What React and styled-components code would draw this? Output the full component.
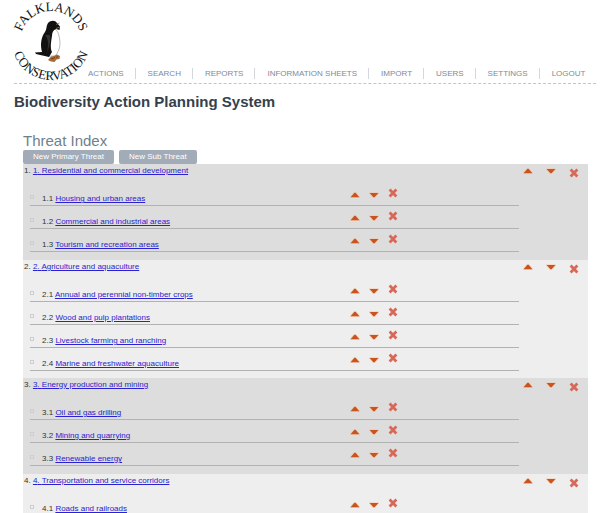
import React from "react";
import styled, { createGlobalStyle } from "styled-components";

const GlobalStyle = createGlobalStyle`
  * { box-sizing: border-box; }
  body {
    margin: 0;
    background: #fff;
    color: #333;
    font-family: "Liberation Sans", Arial, sans-serif;
    font-size: 8px;
    line-height: 10px;
  }
  h1, h2, ol, ul, p { margin: 0; padding: 0; }
  ol, ul { list-style: none; }
  button { border: 0; padding: 0; background: none; font: inherit; cursor: pointer; }
`;

const Page = styled.div`
  padding: 0 4px 0 14px;
`;

const Header = styled.header`
  display: flex;
  align-items: flex-end;
  height: 84px;
  border-bottom: 1px dashed #c4c4c4;
`;

const Logo = styled.svg`
  flex: none;
  width: 74px;
  height: 84px;
  overflow: visible;
`;

const LogoText = styled.text`
  font-family: "Liberation Serif", "Times New Roman", serif;
  font-size: 13px;
  fill: #111;
`;

const Menu = styled.ul`
  display: flex;
  padding-bottom: 4px;
`;

const MenuItem = styled.li`
  padding: 0 11px 0 12px;
  line-height: 11px;
  border-left: 1px solid #d4d8da;
  &:first-child { padding-left: 0; border-left: 0; }
`;

const MenuLink = styled.a`
  color: #7c8b97;
  text-decoration: none;
  text-transform: uppercase;
  white-space: nowrap;
`;

const Title = styled.h1`
  padding-top: 9px;
  color: #34414d;
  font-size: 15px;
  line-height: 18px;
`;

const Content = styled.main`
  margin: 21px 8px 0 9px;
`;

const Heading = styled.h2`
  color: #6f7f8c;
  font-size: 15px;
  font-weight: 400;
  line-height: 18px;
`;

const Actions = styled.div`
  display: flex;
  gap: 5px;
`;

const ActionButton = styled.button`
  && {
    height: 14px;
    padding: 0 10px;
    border-radius: 2px;
    background: #a1acb8;
    color: #fff;
  }
`;

const Group = styled.li`
  padding-bottom: 8px;
  background: #ddd;
  &:nth-child(even) { padding-bottom: 7px; background: #eee; }
`;

const GroupHead = styled.div`
  display: flex;
  justify-content: space-between;
  height: 19px;
  padding: 2px 9px 0 1px;
`;

const GroupTools = styled.div`
  display: grid;
  grid-template-columns: repeat(3, 10px);
  column-gap: 13px;
  padding-top: 2px;
  align-items: start;
`;

const Entry = styled.a`
  color: #2a22d0;
  text-decoration: underline;
`;

const SubList = styled.ul`
  margin: 0 69px 0 7px;
`;

const SubRow = styled.li`
  display: grid;
  grid-template-columns: 12px minmax(0, 308px) auto 1fr;
  height: 23px;
  border-bottom: 1px solid #b2b2b2;
`;

const Handle = styled.span`
  align-self: end;
  width: 4px;
  height: 4px;
  margin-bottom: 6px;
  border: 1px solid #ccced2;
`;

const SubName = styled.p`
  align-self: end;
  padding-bottom: 1px;
`;

const SubTools = styled.div`
  display: grid;
  grid-template-columns: repeat(3, 10px);
  column-gap: 9px;
  padding-top: 5px;
  align-items: start;
`;

const IconButton = styled.button`
  display: block;
  width: 10px;
  height: 10px;
  svg { display: block; }
`;

const UpIcon = () => (
  <svg width="10" height="10" viewBox="0 0 10 10" aria-hidden="true">
    <path d="M0 6V4.6L4 .2H6L10 4.6V6Z" fill="#f7c3a0" opacity=".6" />
    <path d="M.6 5.2 4.4 .8H5.6L9.4 5.2Z" fill="#c9541f" />
  </svg>
);

const DownIcon = () => (
  <svg width="10" height="10" viewBox="0 0 10 10" aria-hidden="true">
    <path d="M0 .2H10V1.6L6 6H4L0 1.6Z" fill="#f7c3a0" opacity=".6" />
    <path d="M.6 1H9.4L5.6 5.2H4.4Z" fill="#c9541f" />
  </svg>
);

const DeleteIcon = () => (
  <svg width="10" height="10" viewBox="0 0 10 10" aria-hidden="true">
    <path d="M2.6 2.6 7.4 7.4M7.4 2.6 2.6 7.4" stroke="#d86857" strokeWidth="2.8" strokeLinecap="square" />
  </svg>
);

const Move = styled(IconButton)`
  margin-top: ${(p) => (p.$sub ? 4 : 0)}px;
`;

function Tools({ name, sub }) {
  return (
    <>
      <Move $sub={sub} type="button" aria-label={`Move ${name} up`}><UpIcon /></Move>
      <Move $sub={sub} type="button" aria-label={`Move ${name} down`}><DownIcon /></Move>
      <IconButton type="button" aria-label={`Delete ${name}`}><DeleteIcon /></IconButton>
    </>
  );
}

function FalklandsLogo() {
  return (
    <Logo viewBox="0 0 74 84" role="img" aria-label="Falklands Conservation">
      <defs>
        <path id="arc-top" d="M6 43A31 31 0 0 1 68 43" />
        <path id="arc-bottom" d="M-2 42A39 39 0 0 0 76 42" />
      </defs>
      <LogoText textAnchor="middle">
        <textPath href="#arc-top" startOffset="50%">FALKLANDS</textPath>
      </LogoText>
      <LogoText textAnchor="middle">
        <textPath href="#arc-bottom" startOffset="50%">CONSERVATION</textPath>
      </LogoText>
      <path d="M36 31C40 28 44 31 45 37C47 44 46 52 41 57L35 57C31 49 32 38 36 31Z" fill="#fff" stroke="#777" strokeWidth=".5" />
      <path d="M34 24C37 21 41 21 43 24L46 27.5 45.5 31 42 30C39 31 38 34 38 37C37 43 36 49 38 53L35 58C31 57 26 56 22 55L21 53.5 28 53C26 46 27 38 31 33C33 30 32 27 34 24Z" fill="#111" />
      <path d="M31 36C35 40 35 49 32 55C35 50 37 42 36 36Z" fill="#333" />
      <path d="M42 25.5 45.5 24M42 29.5 45.5 28" stroke="#9b7a45" strokeWidth=".8" />
      <path d="M34 61 37 57.5 40 57 43 55.5 46 57 45.5 60 42.5 60.5 40.5 63 37 62.5Z" fill="#a76b3a" />
      <path d="M37 60 41 58.5M42 58.5 44 57.5" stroke="#633715" strokeWidth=".8" />
    </Logo>
  );
}

const menu = ["Actions", "Search", "Reports", "Information Sheets", "Import", "Users", "Settings", "Logout"];

const threats = [
  {
    name: "Residential and commercial development",
    items: ["Housing and urban areas", "Commercial and industrial areas", "Tourism and recreation areas"],
  },
  {
    name: "Agriculture and aquaculture",
    items: [
      "Annual and perennial non-timber crops",
      "Wood and pulp plantations",
      "Livestock farming and ranching",
      "Marine and freshwater aquaculture",
    ],
  },
  {
    name: "Energy production and mining",
    items: ["Oil and gas drilling", "Mining and quarrying", "Renewable energy"],
  },
  { name: "Transportation and service corridors", items: ["Roads and railroads"] },
];

export default function App() {
  return (
    <Page>
      <GlobalStyle />
      <Header>
        <FalklandsLogo />
        <nav>
          <Menu>
            {menu.map((label) => (
              <MenuItem key={label}><MenuLink href="#">{label}</MenuLink></MenuItem>
            ))}
          </Menu>
        </nav>
      </Header>
      <Title>Biodiversity Action Planning System</Title>
      <Content>
        <Heading>Threat Index</Heading>
        <Actions>
          <ActionButton type="button">New Primary Threat</ActionButton>
          <ActionButton type="button">New Sub Threat</ActionButton>
        </Actions>
        <ol>
          {threats.map((threat, i) => (
            <Group key={threat.name}>
              <GroupHead>
                <p>{i + 1}. <Entry href="#">{i + 1}. {threat.name}</Entry></p>
                <GroupTools><Tools name={threat.name} /></GroupTools>
              </GroupHead>
              <SubList>
                {threat.items.map((item, j) => (
                  <SubRow key={item}>
                    <Handle />
                    <SubName>{i + 1}.{j + 1} <Entry href="#">{item}</Entry></SubName>
                    <SubTools><Tools sub name={item} /></SubTools>
                  </SubRow>
                ))}
              </SubList>
            </Group>
          ))}
        </ol>
      </Content>
    </Page>
  );
}
